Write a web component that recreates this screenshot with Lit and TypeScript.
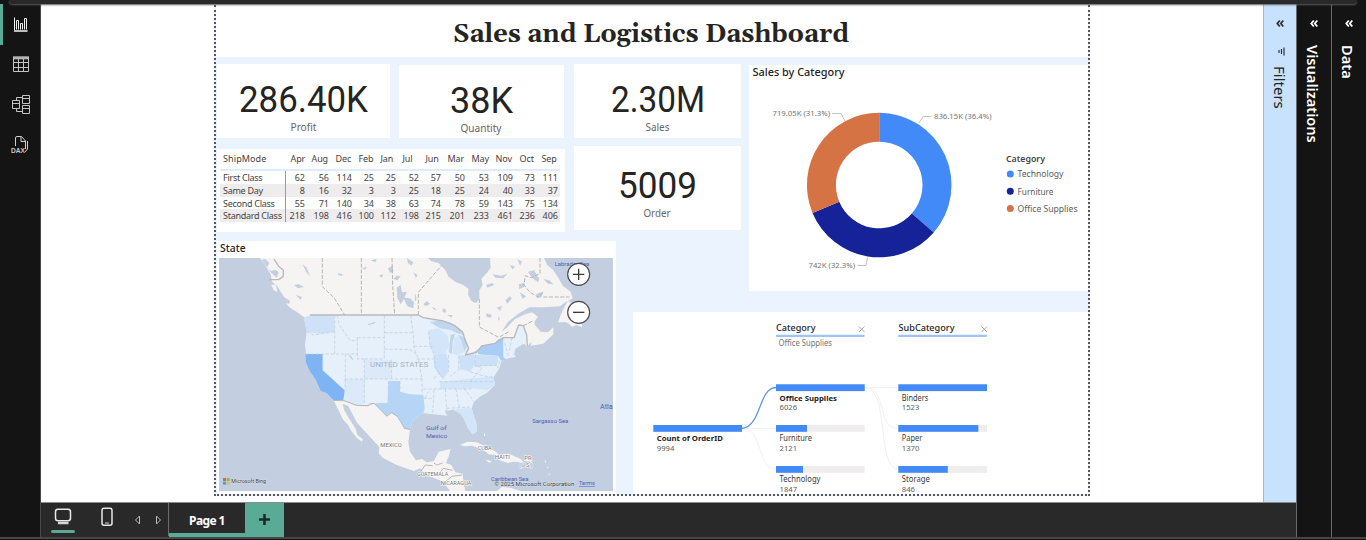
import { LitElement, html, svg, css } from "lit";
import { customElement } from "lit/decorators.js";

/* Text stretched to an exact advance width. */
const t = (x: number, y: number, s: string, w: number, cls: string) =>
  svg`<text class=${cls} x=${x} y=${y} textLength=${w} lengthAdjust="spacingAndGlyphs">${s}</text>`;

@customElement("kpi-card")
class KpiCard extends LitElement {
  static properties = { value: {}, label: {}, vw: { type: Number }, lw: { type: Number } };
  declare value: string;
  declare label: string;
  declare vw: number;
  declare lw: number;
  static styles = css`
    :host { display: flex; flex-direction: column; align-items: center; background: #fff; }
    svg { display: block; overflow: visible; }
    .v { font: 400 36px Roboto, sans-serif; fill: #252423; }
    .l { font: 400 10.3px 'Noto Sans', sans-serif; fill: #666462; }
  `;
  render() {
    return html`
      <svg width=${this.vw} height="48">${t(0, 48, this.value, this.vw, "v")}</svg>
      <svg width=${this.lw} height="19">${t(-0.5, 19, this.label, this.lw, "l")}</svg>`;
  }
}

@customElement("ship-table")
class ShipTable extends LitElement {
  static styles = css`
    :host { display: block; background: #fff; font: 9px/13px 'Noto Sans', sans-serif; color: #454342; }
    .row { display: grid; grid-template-columns: 66px 21px 24px 23px 22px 22px 23px 22px 24px 24px 24px 22px 23px;
      height: 12.8px; margin: 0 5px 0 3px; white-space: nowrap; }
    .row span { text-align: right; padding-right: 2px; }
    .row span:first-child { text-align: left; padding: 0 0 0 3px; letter-spacing: -0.27px; }
    .head { height: 20px; line-height: 20px; border-bottom: 2px solid #dfecfa; }
    .head span { text-align: left; padding: 0 0 0 4.5px; letter-spacing: -0.1px; }
    .head span:first-child { letter-spacing: 0.1px; }
    .body span:first-child { border-right: 1px solid #74a3dc; }
    .alt { background: #eeecec; }
  `;
  months = "Apr Aug Dec Feb Jan Jul Jun Mar May Nov Oct Sep".split(" ");
  rows: [string, number[]][] = [
    ["First Class", [62, 56, 114, 25, 25, 52, 57, 50, 53, 109, 73, 111]],
    ["Same Day", [8, 16, 32, 3, 3, 25, 18, 25, 24, 40, 33, 37]],
    ["Second Class", [55, 71, 140, 34, 38, 63, 74, 78, 59, 143, 75, 134]],
    ["Standard Class", [218, 198, 416, 100, 112, 198, 215, 201, 233, 461, 236, 406]],
  ];
  render() {
    return html`
      <div class="row head"><span>ShipMode</span>${this.months.map((m) => html`<span>${m}</span>`)}</div>
      ${this.rows.map(([n, v], i) => html`
        <div class="row body ${i % 2 ? "alt" : ""}"><span>${n}</span>${v.map((k) => html`<span>${k}</span>`)}</div>`)}`;
  }
}

@customElement("state-map")
class StateMap extends LitElement {
  static styles = css`
    :host { display: block; background: #fff; font-family: 'Noto Sans', sans-serif; padding: 0 3px 3px 2px; box-sizing: border-box; }
    .title { font-weight: 500; font-size: 10.3px; line-height: 15px; height: 17px; color: #252423; letter-spacing: 0.1px; padding-left: 1px; box-sizing: border-box; }
    svg { display: block; }
    .land { fill: #f5f4f2; }
    .sea { fill: #c3cfe0; }
    .us { fill: #e6f0fa; }
    .bord { fill: none; stroke: #bab8b7; stroke-width: 4; stroke-linejoin: round; }
    .prov { fill: none; stroke: #b7b5b3; stroke-width: 3; stroke-dasharray: 12 5; }
    .st { fill: none; stroke: #bfccdb; stroke-width: 2.2; stroke-dasharray: 10 5; }
    .c { font: 400 17px Roboto, sans-serif; fill: #767575; stroke: #fff; stroke-width: 3; paint-order: stroke; }
    .us-l { font: 400 24px Roboto, sans-serif; fill: #a9b3bf; }
    .w { font: 400 18px Roboto, sans-serif; fill: #4a62b8; }
    .big { font-size: 21px; }
    .terms { font-size: 16px; text-decoration: underline; }
    .k { font: 400 16px Roboto, sans-serif; fill: #3c3c3c; stroke: #dfe5ee; stroke-width: 2; paint-order: stroke; }
    .btn { fill: #fff; stroke: #4b4a49; stroke-width: 3.5; }
    .sign { stroke: #3b3a39; stroke-width: 4; fill: none; }
    .thin { stroke-width: 3; }
  `;
  render() {
    return html`<div class="title">State</div>
    <svg width="394" height="233" viewBox="27 69 1182 699">
      <rect class="sea" x="27" y="69" width="1182" height="699"></rect>
      <path class="land" d="M150 69L164 88 172 102 182 118 186 140 200 150 212 170 222 186 240 198 236 215 252 222 270 228 280 236 300 246 640 250 700 262 750 290 768 315 775 345 765 360 790 352 815 335 855 325 880 308 930 308 950 335 965 320 962 332 1000 326 1030 298 1030 277 1014 292 992 290 978 280 972 262 984 245 966 232 945 238 915 252 890 278 875 290 893 262 925 236 958 217 1000 217 1050 214 1068 200 1088 190 1082 170 1058 152 1046 130 1030 106 1012 90 1002 69Z"></path>
      <path class="land" d="M912 272L940 252 965 258 978 240 972 268 990 288 978 296 945 292 925 268Z"></path>
      <path class="land" d="M228 205L245 208 272 222 298 238 300 250 290 252 262 232 240 218ZM184 150L198 148 202 172 192 166Z"></path>
      <path class="land" d="M1044 262L1052 240 1062 218 1074 196 1082 204 1076 222 1096 226 1108 240 1117 256 1116 276 1098 270 1088 276 1070 262Z"></path>
      <path class="sea" d="M654 69L664 79 686 84 706 106 716 126 738 142 760 150 776 162 774 178 784 198 798 204 808 192 808 166 818 150 814 132 832 112 842 98 840 69Z"></path>
      <path class="sea" d="M560 158L572 150 576 172 590 170 584 188 600 190 612 202 610 220 592 214 582 192 572 208 562 188ZM534 100L548 92 550 108 540 114ZM590 69L610 82 604 92 594 84ZM482 76L500 72 496 82ZM550 132L560 122 572 124 562 136ZM506 122L520 118 516 128ZM278 88L290 98 300 124 288 110ZM384 115L398 117 396 122 384 120ZM252 150L266 148 282 156 264 160ZM155 74L166 72 178 84 170 98 184 108 196 104 206 112 200 128 182 112ZM258 180L276 186 272 194ZM456 100L470 95 466 104ZM610 112L622 120 618 130Z"></path>
      <path class="sea" d="M640 208L650 198 660 206 648 214ZM664 216L676 220 678 228ZM698 220L708 224 706 234 698 230ZM828 150L848 144 852 150 832 158ZM848 118L874 122 892 116 880 130 856 128ZM900 90L914 94 908 104ZM922 72L936 80 930 92ZM954 110L972 106 988 132 984 142 966 128ZM926 148L944 144 942 156 928 162ZM886 196L900 184 906 190 892 206ZM860 218L876 212 870 228ZM930 172L948 184 938 192ZM980 176L1000 170 994 186 980 190ZM1000 132L1018 136 1030 148 1014 146ZM828 235L846 240 842 248 830 246ZM864 244L870 252 866 258ZM712 240L728 240 724 248ZM615 175L620 192 614 200Z"></path>
      <path class="us" d="M282 248L300 241 625 241 660 254 700 262 735 276 758 296 766 318 774 340 766 358 800 350 815 333 855 325 880 308 912 308 922 284 926 270 940 272 948 300 954 320 930 332 916 342 912 358 918 366 896 370 874 380 868 400 850 428 855 450 830 474 812 484 792 500 785 520 800 570 800 590 788 598 774 580 764 556 752 536 730 524 704 528 712 542 692 540 668 538 640 534 625 542 606 562 600 583 583 580 562 544 545 533 530 543 492 503 475 512 440 510 402 497 372 497 350 475 332 468 316 432 300 410 288 384 288 357 285 330 290 290Z"></path>
      <path fill="#cee1f7" d="M282 248L300 241 372 241 374 290 330 296 290 290Z"></path>
      <path fill="#dce9f9" d="M404 432L463 432 463 507 440 510 402 497ZM463 374L545 374 545 432 463 432Z"></path>
      <path fill="#7fb4f4" d="M287 357L338 357 338 406 404 466 400 496 372 497 350 475 332 468 316 432 300 410 288 384Z"></path>
      <path fill="#b5d4f6" d="M535 438L570 438 570 470 600 478 640 480 644 520 640 534 625 542 606 562 600 583 583 580 562 544 545 533 530 543 494 505 533 503Z"></path>
      <path fill="#a9cdf6" d="M804 352L815 333 855 325 866 312 879 309 880 366 890 374 874 378 864 362 804 358Z"></path>
      <path fill="#cce1f8" d="M672 358L708 356 716 378 714 410 700 432 688 420 672 396ZM746 362L770 360 794 358 796 388 780 410 750 402ZM796 360L862 362 866 378 858 392 796 394Z"></path>
      <path fill="#d3e5f8" d="M724 524L784 518 800 568 800 590 788 598 774 580 764 556 752 536 730 524ZM690 440L850 424 855 450 830 466 790 460 690 462ZM655 286L685 280 712 300 718 330 706 356 672 356 660 330Z"></path>
      <path fill="#bfd6ef" d="M660 262L690 256 720 262 748 280 764 300 740 294 724 286 690 280ZM722 300L736 296 728 320 726 358 716 352ZM744 298L766 310 774 330 762 352 754 320Z"></path>
      <path fill="#d5e6f8" d="M732 308L746 302 756 326 764 350 744 360 728 356Z"></path>
      <path class="st" d="M290 290L312 300 372 290M374 241V356M287 357H442M382 241L388 270 420 316 442 318M442 308V372H463M442 308H523M523 241V374M463 372H523M523 293H610M523 342L600 344 622 360M338 357V406M406 357V464M404 432H638M463 374V507M545 374V432M535 438V503M570 438V470M602 241L610 300 612 340 625 370 636 432 636 478M612 334H672M620 372H672M656 290L660 330 672 358 676 396 700 432M716 360V410M746 362V402M796 360V394L862 390M688 440H850M640 462H790M640 490H672M672 464L668 538M706 462L710 528M738 462L748 520M710 520L784 516M762 460L792 500M750 402L720 424M780 410L810 420 850 428M800 392L815 400 780 440M880 310L896 366M906 308L898 350M870 378L862 400M672 430L690 412M645 490L655 470"></path>
      <path fill="none" stroke="#bdd0e6" stroke-width="4" d="M474 268L486 266 496 262M418 360L428 374"></path>
      <path class="prov" d="M337 69V155L372 188 404 240M454 69V240M546 69L548 150 554 240M625 240V172L694 92M808 192V276L868 308M990 69V115L965 128 946 122 942 150 960 172 985 186 1000 172M1000 186H1078M870 305L900 288M940 272L968 258"></path>
      <path class="bord" d="M300 240H625L640 248 700 258 735 272 758 292 766 318 776 340 766 360 800 352 815 333 855 325 880 308 912 308 926 270 940 272 950 300 952 334M178 134H206L220 124 220 106 206 94 192 72"></path>
      <path class="bord thin" d="M372 497H402L440 511 475 512 478 507 492 505 530 543 545 533 562 544 583 580 600 583"></path>
      <path class="land" d="M372 498L402 499 440 513 475 514 492 506 530 545 545 535 562 546 583 582 600 585 595 620 600 650 618 676 636 672 650 682 672 678 686 650 722 642 716 664 708 684 724 690 736 712 758 716 760 740 766 768 720 768 700 740 650 720 630 700 612 708 560 690 518 668 506 655 508 636 488 614 460 584 440 562 424 530 414 512 398 506 402 524 418 552 436 580 442 600 458 612 456 620 440 608 424 588 414 570 398 552 388 530Z"></path>
      <path class="bord thin" d="M630 712L646 690 668 692M672 684L680 690 698 684M690 712L700 700 728 706M706 740L726 724 756 720"></path>
      <path class="land" d="M750 630L772 620 800 622 830 636 860 652 866 660 836 658 820 644 786 632 764 634ZM868 660L896 656 932 672 940 682 910 680 894 684 864 674ZM826 674L846 678 838 684ZM944 670L964 672 964 680 944 678ZM860 768L876 756 900 758 934 768ZM822 592L826 602 822 604Z"></path>
      <path fill="#f5f4f2" d="M1004 676l5 3-3 5zM1012 694l4 4-4 3zM1016 714l4 3-3 5z"></path>
      ${t(480, 397, "UNITED STATES", 175, "us-l")}
      ${t(511, 636, "MEXICO", 64, "c")}
      ${t(803, 645, "CUBA", 42, "c")}
      ${t(854, 673, "HAITI", 46, "c")}
      ${t(943, 676, "PR", 22, "c")}
      ${t(928, 695, "(U.S.)", 40, "c")}
      ${t(621, 722, "GUATEMALA", 94, "c")}
      ${t(692, 751, "NICARAGUA", 92, "c")}
      ${t(648, 585, "Gulf of", 62, "w")}
      ${t(648, 609, "Mexico", 64, "w")}
      ${t(967, 564, "Sargasso Sea", 108, "w")}
      ${t(1034, 94, "Labrador Sea", 104, "w")}
      ${t(843, 739, "Caribbean Sea", 112, "w")}
      ${t(1170, 522, "Atla", 38, "w big")}
      ${t(853, 752, "© 2025 Microsoft Corporation", 240, "k")}
      ${t(1107, 751, "Terms", 48, "w terms")}
      <path fill="#d9664a" d="M39 729h9v9h-9z"></path><path fill="#8db954" d="M50 729h9v9h-9z"></path>
      <path fill="#4b9fe0" d="M39 740h9v9h-9z"></path><path fill="#e9bd4b" d="M50 740h9v9h-9z"></path>
      ${t(64, 745, "Microsoft Bing", 104, "k")}
      <circle class="btn" cx="1106" cy="118" r="33"></circle><path class="sign" d="M1089 118h34M1106 101v34"></path>
      <circle class="btn" cx="1106" cy="232" r="33"></circle><path class="sign" d="M1089 232h34"></path>
    </svg>`;
  }
}

@customElement("donut-chart")
class DonutChart extends LitElement {
  static styles = css`
    :host { display: block; background: #fff; }
    svg { display: block; }
    .title { font: 500 10.6px 'Noto Sans', sans-serif; fill: #252423; }
    .lab { font: 7.5px 'Noto Sans', sans-serif; fill: #767472; }
    .lh { font: 600 9px 'Noto Sans', sans-serif; fill: #484644; }
    .li { font: 9px 'Noto Sans', sans-serif; fill: #605e5c; }
    .lead { fill: none; stroke: #c4c2c0; }
  `;
  data: [string, number, string][] = [["Technology", 836.15, "#418af8"], ["Furniture", 742, "#152298"], ["Office Supplies", 719.05, "#d67344"]];
  render() {
    const cx = 879.2, cy = 185, R = 72.3, r = 43.3;
    const total = this.data.reduce((a, d) => a + d[1], 0);
    let a = 0;
    const p = (ang: number, q: number) => `${(cx + q * Math.sin(ang)).toFixed(2)} ${(cy - q * Math.cos(ang)).toFixed(2)}`;
    return html`<svg width="339" height="226" viewBox="749 65 339 226">
      ${t(752.5, 76.3, "Sales by Category", 92, "title")}
      ${this.data.map(([, v, c]) => {
        const b = a + (v / total) * Math.PI * 2;
        const d = `M${p(a, R)}A${R} ${R} 0 0 1 ${p(b, R)}L${p(b, r)}A${r} ${r} 0 0 0 ${p(a, r)}Z`;
        a = b;
        return svg`<path d=${d} fill=${c}></path>`;
      })}
      <path class="lead" d="M832 113.5h9l4 7.5M919 123l4-6.5h8.500M857.500 265.500h8.500l1.500-8"></path>
      ${t(772.5, 116.3, "719.05K (31.3%)", 57.5, "lab")}
      ${t(934, 119.3, "836.15K (36.4%)", 57.5, "lab")}
      ${t(808.5, 268.3, "742K (32.3%)", 46.5, "lab")}
      ${t(1006, 162.3, "Category", 39, "lh")}
      ${this.data.map(([n, , c], i) => svg`<circle cx="1010.300" cy=${174 + i * 17.2} r="3.500" fill=${c}></circle>
        ${t(1017.5, 177.3 + i * 17.2, n, [46, 36, 60][i], "li")}`)}
    </svg>`;
  }
}

@customElement("decomposition-tree")
class DecompositionTree extends LitElement {
  static styles = css`
    :host { display: block; background: #fff; overflow: hidden; }
    svg { display: block; }
    .h { font: 500 9.3px 'Noto Sans', sans-serif; fill: #252423; }
    .s { font: 8px 'Noto Sans', sans-serif; fill: #767472; }
    .n { font: 8px 'Noto Sans', sans-serif; fill: #3b3a39; }
    .b { font: 700 7.8px 'Noto Sans', sans-serif; fill: #252423; }
    .v { font: 7.6px 'Noto Sans', sans-serif; fill: #605e5c; }
    .x { stroke: #a8a6a4; stroke-width: 1; fill: none; }
    .f { fill: none; stroke: #f2f1f0; }
  `;
  nodes: [number, number, string, number, string, number, boolean][] = [
    [653.3, 425, "Count of OrderID", 66, "9994", 89, true],
    [776, 384.3, "Office Supplies", 57.5, "6026", 89, true],
    [776, 425, "Furniture", 32.5, "2121", 31, false],
    [776, 466, "Technology", 41, "1847", 27, false],
    [898.3, 384.3, "Binders", 26.5, "1523", 89, false],
    [898.3, 425, "Paper", 20.5, "1370", 80, false],
    [898.3, 466, "Storage", 28, "846", 49.5, false],
  ];
  render() {
    return html`<svg width="455" height="183" viewBox="633 312 455 183">
      <path class="f" d="M742 428.500H776M742 428.500C764 428.500 756 469 776 469M865 387.500H898M865 387.500C888 387.500 876 428.500 898 428.500M865 387.500C890 387.500 876 469 898 469"></path>
      <path fill="none" stroke="#5b97ea" stroke-width="1.300" d="M742 428.500C762 426 758 388 776 387.500"></path>
      ${t(776, 331.3, "Category", 39.5, "h")}
      ${t(898.5, 331.3, "SubCategory", 56, "h")}
      <path fill="#a0c2fb" d="M776 334.800h88.500v2.300H776zM898.300 334.800h88.500v2.300h-88.500z"></path>
      <path class="x" d="M859 326.500l5.500 5.500M864.500 326.500l-5.500 5.500M981.500 326.500l5.500 5.500M987 326.500l-5.500 5.500"></path>
      ${t(778.5, 346.3, "Office Supplies", 53.5, "s")}
      ${this.nodes.map(([x, y, n, w, v, bw, bold]) => svg`
        <rect x=${x} y=${y} width="88.700" height="6.800" fill="#efeded"></rect>
        <rect x=${x} y=${y} width=${Math.min(bw, 88.7)} height="6.800" fill="#418af8"></rect>
        ${t(x + 3.5, y + 16.4, n, w, bold ? "b" : "n")}
        ${t(x + 3.5, y + 25.8, v, v.length * 4.4, "v")}`)}
    </svg>`;
  }
}

@customElement("app-root")
class AppRoot extends LitElement {
  static styles = css`
    :host { display: flex; flex-direction: column; width: 1366px; height: 540px; background: #141414; overflow: hidden; font-family: 'Noto Sans', 'Open Sans', sans-serif; box-sizing: border-box; border-bottom: 1px solid #141414; }
    svg { display: block; }
    .top { height: 4px; flex: none; margin: 0 9px; background: #292929; border-radius: 0 0 6px 6px; box-shadow: 0 1px 2px #5a5a5a; z-index: 1; position: relative; }
    .mid { flex: 1; display: flex; min-height: 0; border-bottom: 2px solid #484648; }
    .rail { width: 40px; border-right: 1px solid #494949; position: relative; flex: none; display: flex; flex-direction: column; align-items: center; }
    .active { position: absolute; left: 0; top: 0; width: 3px; height: 41px; background: #5aab96; }
    .center { flex: 1; display: flex; flex-direction: column; min-width: 0; }
    .stage { flex: 1; display: flex; background: #fff; min-height: 0; }
    .report { margin: 1px 0 6px 173px; width: 872px; border: 2px dotted #565456; background: #eaf3fe; overflow: hidden; border-top: 0; }
    .title { height: 52px; background: #fff; }
    .title text { font: 700 25.5px Georgia, Gelasio, 'Liberation Serif', serif; fill: #252423; }
    .grid { display: grid; padding: 7px 0 0 1px;
      grid-template-columns: 173px 9px 165px 10px 42px 17px 108px 8px 339px;
      grid-template-rows: 74px 8px 84px 11px 50px 21px 183px; }
    .profit { grid-area: 1 / 1; }
    .qty { grid-area: 1 / 3; margin-top: 1px; }
    .sales { grid-area: 1 / 5 / 2 / 8; }
    .order { grid-area: 3 / 5 / 4 / 8; padding-top: 4px; }
    .ship { grid-area: 3 / 1 / 4 / 4; margin: 3px -1px -2px 0; }
    .map { grid-area: 5 / 1 / 8 / 6; }
    .donut { grid-area: 1 / 9 / 6 / 10; margin-top: 1px; }
    .tree { grid-area: 7 / 7 / 8 / 10; }
    .filters { margin-left: auto; width: 32px; background: #c8e1fd; border-left: 1px solid #b5b5b5; }
    .pane { display: flex; flex-direction: column; align-items: center; color: #252423; }
    .pane .chev { margin-top: 15px; height: 9px; }
    .pane .funnel { margin-top: 19px; }
    .pane .name { writing-mode: vertical-rl; font-size: 15px; line-height: 18px; white-space: nowrap; }
    .filters .name { margin-top: 10px; }
    .dark { width: 34px; border-left: 1px solid #6a6a6a; color: #fff; flex: none; }
    .dark .name { font-weight: 600; font-size: 14.6px; margin-top: 17px; margin-right: 2px; }
    .tabs { height: 34px; border-top: 1px solid #8b8b8b; background: #292929; display: flex; flex: none; }
    .tools { width: 127px; border-right: 1px solid #6b6b6b; }
    .tab { width: 76px; box-sizing: border-box; border-bottom: 4px solid #5aab96; color: #fff; font: 700 12px/36px 'Noto Sans', sans-serif; letter-spacing: -0.6px; text-align: center; }
    .add { width: 39px; background: #5aab96; display: flex; justify-content: center; padding-top: 11px; box-sizing: border-box; }
    .dx { font: 700 7px 'Liberation Sans', sans-serif; fill: #c9c9c9; }
  `;
  chev(c: string) {
    return html`<svg class="chev" width="10" height="9" viewBox="0 0 10 9" fill="none" stroke=${c} stroke-width="1.800"><path d="M4.800 1.500L2.300 4.500 4.800 7.500M8.300 1.500L5.800 4.500 8.300 7.500"></path></svg>`;
  }
  render() {
    return html`
      <div class="top"></div>
      <div class="mid">
        <div class="rail">
          <div class="active"></div>
          <svg width="40" height="160" viewBox="0 4 40 160" fill="none" stroke="#d6d6d6">
            <path stroke="#f2f2f2" d="M14.500 17.500V30M16.500 29.500V20.500H18.500V29.500M20.500 29.500V23.500H22.500V29.500M24.500 29.500V18.500H26.500V29.500"></path>
            <path stroke="#bdbdbd" stroke-width="2" d="M14 31H27.500"></path>
            <path stroke="#b4b4b4" stroke-width="3" d="M13 57.800H29"></path>
            <path stroke="#c4c4c4" d="M13.500 57V71.500H28.500V57M13 62.500H29M13 67.500H29M18.500 59V71M23.500 59V71"></path>
            <path stroke="#c4c4c4" d="M12.500 100.500H19.500V108.500H12.500ZM12 103.500H20M22.500 95.500H29.500V103.500H22.500ZM22 98.500H30M22.500 105.500H29.500V113.500H22.500ZM22 108.500H30M16.500 100V97.500H22M16.500 109V111.500H22"></path>
            <path stroke="#cfcfcf" d="M15.500 146V138Q15.500 136.500 17 136.500H21.500L25.500 141V149M21 137V141.500H25M27.500 141V149L25 152"></path>
            <text class="dx" stroke="none" x="11" y="152.500" textLength="14" lengthAdjust="spacingAndGlyphs">DAX</text>
          </svg>
        </div>
        <div class="center">
          <div class="stage">
            <div class="report">
              <div class="title"><svg width="872" height="52" viewBox="216 5 872 52">${t(453, 42.3, "Sales and Logistics Dashboard", 396, "")}</svg></div>
              <div class="grid">
                <kpi-card class="profit" value="286.40K" label="Profit" .vw=${129} .lw=${26}></kpi-card>
                <kpi-card class="qty" value="38K" label="Quantity" .vw=${63} .lw=${41}></kpi-card>
                <kpi-card class="sales" value="2.30M" label="Sales" .vw=${94} .lw=${24}></kpi-card>
                <kpi-card class="order" value="5009" label="Order" .vw=${79} .lw=${27}></kpi-card>
                <ship-table class="ship"></ship-table>
                <state-map class="map"></state-map>
                <donut-chart class="donut"></donut-chart>
                <decomposition-tree class="tree"></decomposition-tree>
              </div>
            </div>
            <div class="pane filters">
              ${this.chev("#333")}
              <svg class="funnel" width="10" height="9" viewBox="0 0 10 9" stroke="#333" stroke-width="1.200"><path d="M9 0.500V8.500M6.500 2V7M4 3V6"></path></svg>
              <div class="name">Filters</div>
            </div>
          </div>
          <div class="tabs">
            <svg class="tools" width="127" height="33" viewBox="41 503.500 127 33" fill="none">
              <rect x="55.500" y="509.800" width="15" height="11.500" rx="2.500" stroke="#e8e8e8" stroke-width="1.500"></rect>
              <path stroke="#d5d5d5" stroke-width="2.500" d="M58 523.500H68.500"></path>
              <rect x="51" y="530.500" width="24" height="3" rx="1.500" fill="#5aab96"></rect>
              <rect x="102" y="508.800" width="10" height="17" rx="2" stroke="#e8e8e8" stroke-width="1.500"></rect>
              <path stroke="#d5d5d5" d="M105 523.500H109"></path>
              <path stroke="#b9b9b9" d="M139.500 516.500V524.500L135.500 520.500ZM156.500 516.500V524.500L160.500 520.500Z"></path>
            </svg>
            <div class="tab">Page 1</div>
            <div class="add"><svg width="11" height="11" viewBox="0 0 11 11"><path stroke="#1c2b27" stroke-width="2.600" d="M5.500 0V11M0 5.500H11"></path></svg></div>
          </div>
        </div>
        <div class="pane dark">${this.chev("#fff")}<div class="name">Visualizations</div></div>
        <div class="pane dark">${this.chev("#fff")}<div class="name">Data</div></div>
      </div>`;
  }
}
